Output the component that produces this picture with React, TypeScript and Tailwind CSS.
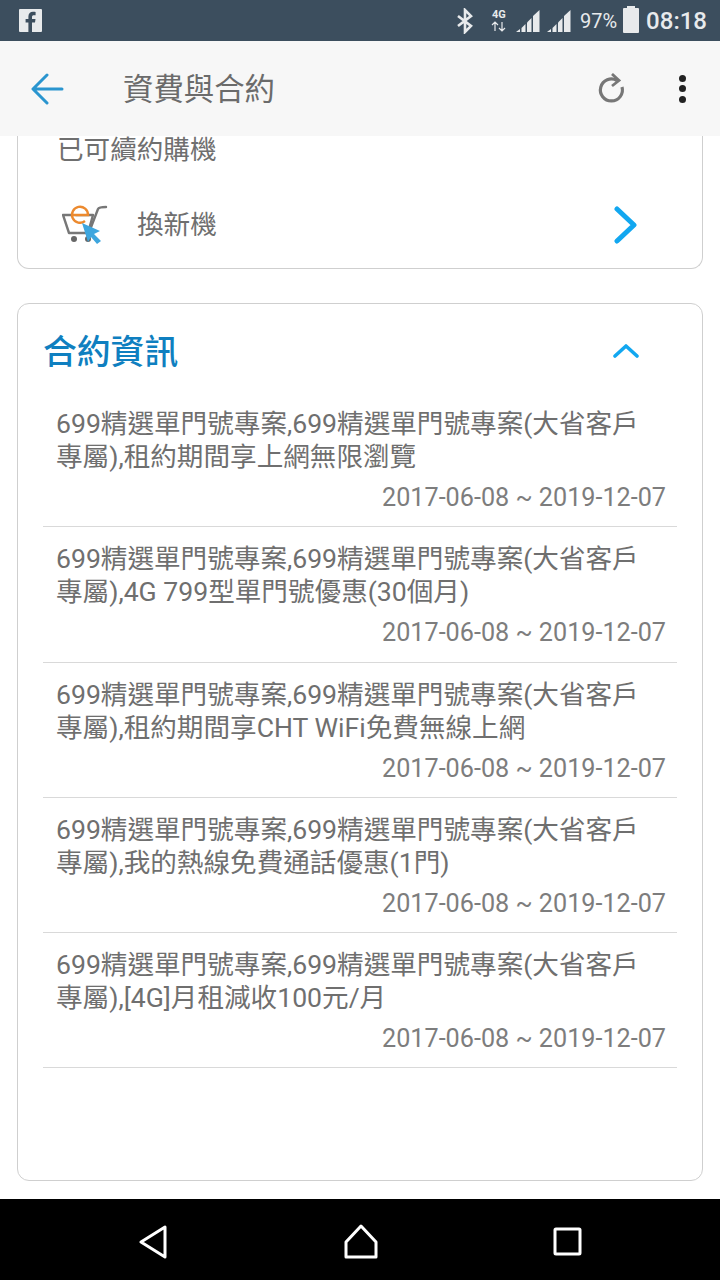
const rows = [
  "專屬),租約期間享上網無限瀏覽",
  "專屬),4G 799型單門號優惠(30個月)",
  "專屬),租約期間享CHT WiFi免費無線上網",
  "專屬),我的熱線免費通話優惠(1門)",
  "專屬),[4G]月租減收100元/月",
];

function Signal() {
  return (
    <svg width="24" height="24" viewBox="0 0 24 24" fill="#e8eaec">
      <path d="M0 23 L4 20 V23Z" />
      <path d="M5.5 19 L9.5 15 V23 H5.5Z" />
      <path d="M11 13.5 L15.5 9 V23 H11Z" />
      <path d="M17 7 L23.5 1 V23 H17Z" />
    </svg>
  );
}

export default function App() {
  return (
    <div className="flex h-[1280px] w-[720px] flex-col overflow-hidden bg-white font-['Roboto','Noto_Sans_CJK_TC',sans-serif] text-[#6f6f6f]">
      <div className="flex h-[41px] shrink-0 items-center bg-[#3c4e5e] pl-[19px] pr-[13px] text-[#e8eaec]">
        <div className="relative h-[23px] w-[23px] overflow-hidden rounded-[1px] bg-[#e8eaec]">
          <svg viewBox="0 0 23 23" className="absolute inset-0 h-full w-full">
            <path d="M13 23 V13.5 H16 L16.5 10 H13 V8 C13 6.8 13.6 6.2 14.8 6.2 H16.6 V3 C16 2.9 15 2.8 14 2.8 C11.2 2.8 9.4 4.5 9.4 7.5 V10 H6.6 V13.5 H9.4 V23Z" fill="#3c4e5e" />
          </svg>
        </div>
        <div className="ml-auto flex items-center">
          <svg width="18" height="26" viewBox="0 0 18 26" fill="none" stroke="#e8eaec" strokeWidth="2.6" className="mr-[17px]">
            <path d="M2 8 L15 18 L9 24 V2 L15 8 L2 18" />
          </svg>
          <div className="mr-[9px] flex w-[16px] flex-col items-center leading-none">
            <span className="text-[11px] font-bold leading-[12px]">4G</span>
            <svg width="16" height="11" viewBox="0 0 16 11" fill="none" stroke="#e8eaec" strokeWidth="1.2">
              <path d="M4 10 V1 M1 4 L4 1 L7 4 M11 1 V10 M8 7 L11 10 L14 7" />
            </svg>
          </div>
          <Signal />
          <div className="w-[7px]" />
          <Signal />
          <span className="ml-[9px] text-[20px] leading-none">97%</span>
          <div className="relative ml-[6px] h-[25px] w-[16px] rounded-[1px] bg-[#e8eaec]">
            <div className="absolute -top-[2px] left-[4px] h-[3px] w-[8px] bg-[#e8eaec]" />
          </div>
          <span className="ml-[7px] text-[24px] font-medium leading-none">08:18</span>
        </div>
      </div>

      <div className="flex h-[95px] shrink-0 items-center bg-[#f7f7f7] pl-[31px] pr-[34px]">
        <svg width="34" height="34" viewBox="0 0 34 34" fill="none" stroke="#2a95cf" strokeWidth="3" strokeLinecap="round" strokeLinejoin="round">
          <path d="M31 17 H3 M16 3 L2 17 L16 31" />
        </svg>
        <span className="ml-[58px] pt-[3px] text-[30.4px] leading-none text-[#6b6b6b]">資費與合約</span>
        <svg width="30" height="32" viewBox="0 0 30 32" fill="none" className="ml-auto mr-[52px]" stroke="#777777" strokeWidth="3.2">
          <path d="M20 7.5 A11 11 0 1 0 25 14" />
          <path d="M15 1 L22 7.5 L15 13" strokeWidth="2.8" />
        </svg>
        <div className="flex flex-col gap-[3.5px]">
          <div className="h-[7px] w-[7px] rounded-full bg-[#222222]" />
          <div className="h-[7px] w-[7px] rounded-full bg-[#222222]" />
          <div className="h-[7px] w-[7px] rounded-full bg-[#222222]" />
        </div>
      </div>

      <div className="flex flex-1 flex-col bg-white px-[17px]">
        <div className="h-[133px] shrink-0 rounded-b-[12px] border border-t-0 border-[#cfcfcf]">
          <div className="h-[28px] pl-[39px] text-[26.6px] leading-[28px]">已可續約購機</div>
          <div className="mt-[40px] flex items-center pl-[44px] pr-[64px]">
            <svg width="46" height="42" viewBox="0 0 46 42" fill="none">
              <path d="M1 11 H31 L26 29 H7 Z" stroke="#777777" strokeWidth="2.4" strokeLinejoin="round" />
              <path d="M26 31 L36 5 Q37 3 44 3" stroke="#777777" strokeWidth="2.4" strokeLinecap="round" />
              <circle cx="12" cy="35" r="3" fill="#666666" />
              <circle cx="26" cy="35" r="3" fill="#666666" />
              <path d="M10 11 H26 A8 8 0 1 0 23 17" stroke="#ec8a2f" strokeWidth="2.4" fill="#ffffff" />
              <path d="M20 19 L38 27 L32 30 L39 37 L35 40 L29 33 L26 38 Z" fill="#3ea6de" />
            </svg>
            <span className="ml-[29px] text-[26.6px] leading-none">換新機</span>
            <svg width="24" height="38" viewBox="0 0 24 38" fill="none" stroke="#12a7f0" strokeWidth="5" strokeLinecap="round" strokeLinejoin="round" className="ml-auto">
              <path d="M3 3 L20 19 L3 35" />
            </svg>
          </div>
        </div>

        <div className="mt-[34px] h-[878px] shrink-0 rounded-[12px] border border-[#cfcfcf] px-[25px]">
          <div className="flex h-[88px] items-center justify-between pr-[38px] pt-[10px]">
            <span className="text-[33.8px] font-medium leading-none text-[#0f7fc0]">合約資訊</span>
            <svg width="26" height="15" viewBox="0 0 26 15" fill="none" stroke="#12a7f0" strokeWidth="3.6" strokeLinecap="round" strokeLinejoin="round" className="mb-[6px]">
              <path d="M2 13 L13 3 L24 13" />
            </svg>
          </div>
          {rows.map((r) => (
            <div key={r} className="h-[135.25px] border-b border-[#d9d9d9] pl-[13px] pr-[11px] pt-[15px] text-[26.6px] leading-[33px]">
              <div className="whitespace-nowrap">699精選單門號專案,699精選單門號專案(大省客戶</div>
              <div className="whitespace-nowrap">{r}</div>
              <div className="mt-[8px] text-right text-[25.2px] text-[#7d7d7d]">2017-06-08 ~ 2019-12-07</div>
            </div>
          ))}
        </div>
      </div>

      <div className="flex h-[81px] shrink-0 items-center justify-between bg-black pl-[138px] pr-[137px] pt-[5px]">
        <svg width="30" height="34" viewBox="0 0 30 34" fill="none" stroke="#ffffff" strokeWidth="3" strokeLinejoin="round">
          <path d="M27 2 V32 L3 17 Z" />
        </svg>
        <svg width="34" height="36" viewBox="0 0 34 36" fill="none" stroke="#ffffff" strokeWidth="3" strokeLinejoin="round">
          <path d="M17 2 L32 18 V33 H2 V18 Z" />
        </svg>
        <svg width="30" height="30" viewBox="0 0 30 30" fill="none" stroke="#ffffff" strokeWidth="3" strokeLinejoin="round">
          <rect x="2" y="2" width="25" height="25" rx="1" />
        </svg>
      </div>
    </div>
  );
}
